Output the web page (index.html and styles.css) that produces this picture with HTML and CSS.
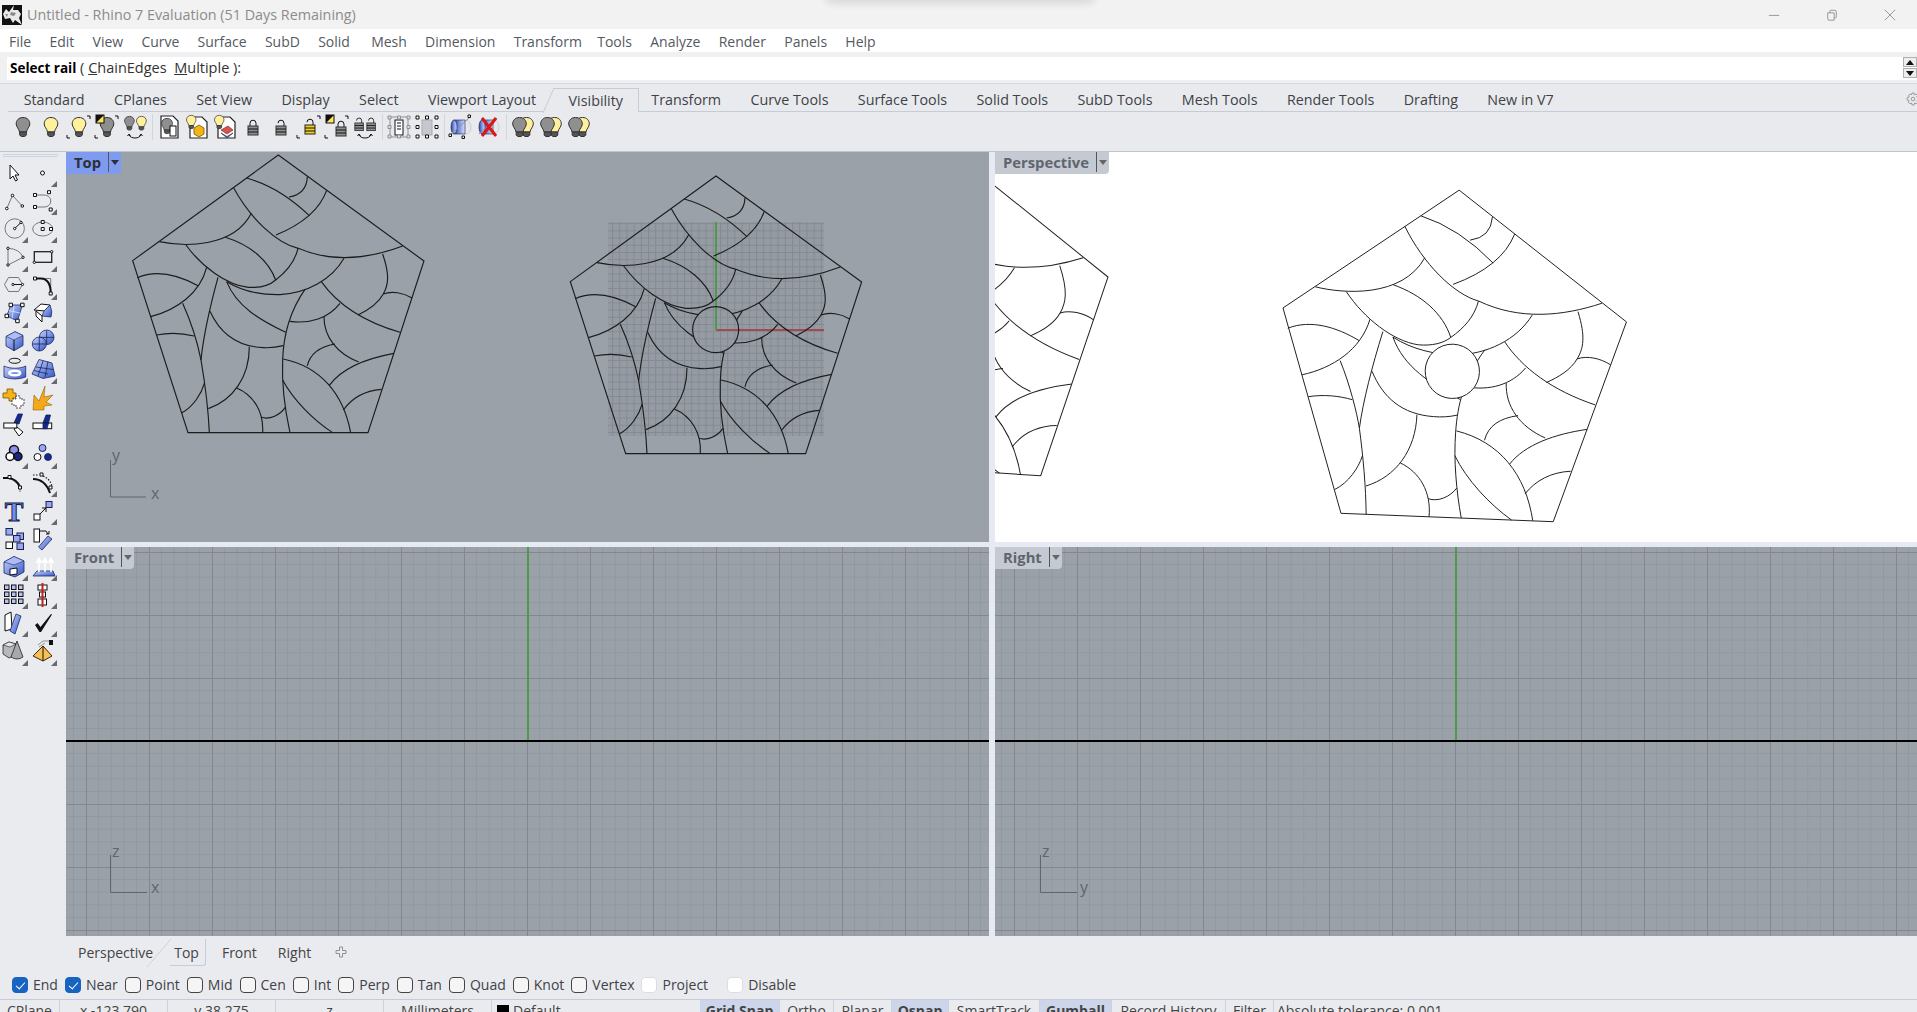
FILE: index.html
```html
<!DOCTYPE html>
<html lang="en">
<head>
<meta charset="utf-8">
<title>Untitled - Rhino 7 Evaluation</title>
<link rel="stylesheet" href="styles.css">
</head>
<body>
<svg class="defs" width="0" height="0" aria-hidden="true">
  <defs>
    <linearGradient id="bl" x1="0" y1="0" x2="1" y2="1"><stop offset="0" stop-color="#c9d4fb"/><stop offset="1" stop-color="#3557c8"/></linearGradient>
    <linearGradient id="cy" x1="0" y1="0" x2="1" y2="0"><stop offset="0" stop-color="#223fa8"/><stop offset=".5" stop-color="#7d97ea"/><stop offset="1" stop-color="#d8dff3"/></linearGradient>
    <g id="pat">
      <path d="M475 15L912 333L744 848L204 848L38 332Z"/>
      <path d="M380 84Q480 112 568 197"/>
      <path d="M562 80Q560 132 507 141"/>
      <path d="M620 121Q590 205 468 255"/>
      <path d="M340 112C390 205 470 280 535 295C640 340 750 325 848 288"/>
      <path d="M118 275C190 290 340 295 394 190"/>
      <path d="M198 285C245 350 320 405 385 412C420 414 450 405 467 390C500 365 525 335 534 295"/>
      <path d="M316 262C390 285 445 330 467 390"/>
      <path d="M320 395C370 425 430 435 480 434C560 430 635 390 672 325"/>
      <path d="M788 312C810 375 805 405 790 432C775 460 745 480 714 495"/>
      <path d="M790 432C815 422 850 428 876 444"/>
      <path d="M604 395C650 460 730 515 840 547"/>
      <path d="M660 460C625 505 570 522 510 514"/>
      <path d="M555 418C505 490 490 560 488 630C485 700 495 780 510 848"/>
      <path d="M320 395C350 470 420 510 497 547"/>
      <path d="M612 500C612 560 650 610 716 636"/>
      <path d="M562 648C570 610 600 590 645 582"/>
      <path d="M822 610C740 625 665 655 628 706"/>
      <path d="M490 627C600 650 670 730 692 848"/>
      <path d="M488 690C520 750 580 810 638 848"/>
      <path d="M784 718C735 722 695 745 670 780"/>
      <path d="M496 772C480 795 450 810 424 802"/>
      <path d="M350 714C400 735 432 785 428 848"/>
      <path d="M388 590C388 680 340 750 265 776"/>
      <path d="M270 484C300 550 350 590 430 593C450 594 470 592 490 587"/>
      <path d="M294 382C270 470 250 560 243 630"/>
      <path d="M188 460C215 520 235 590 243 630C255 700 265 780 268 848"/>
      <path d="M260 352C240 430 170 480 92 500"/>
      <path d="M52 383C110 358 175 375 234 407"/>
      <path d="M110 555C150 547 190 550 222 558"/>
      <path d="M253 700C245 730 220 770 186 788"/>
    </g>
    <mask id="hole" maskUnits="userSpaceOnUse" x="0" y="0" width="960" height="870">
      <rect class="mw" x="0" y="0" width="960" height="870"/>
      <circle class="mk" cx="474" cy="476" r="69"/>
    </mask>
    <g id="patc">
      <g mask="url(#hole)"><use href="#pat"/></g>
      <circle class="pcirc" cx="474" cy="476" r="69"/>
    </g>
    <pattern id="g63" patternUnits="userSpaceOnUse" width="63" height="63">
      <path class="gmin" d="M12.6 0V63M25.2 0V63M37.8 0V63M50.4 0V63M0 12.6H63M0 25.2H63M0 37.8H63M0 50.4H63"/>
      <path class="gmaj" d="M.5 0V63M0 .5H63"/>
    </pattern>
    <pattern id="g7" patternUnits="userSpaceOnUse" width="7.2" height="7.2">
      <rect class="gcell" width="7.2" height="7.2"/>
      <path class="gline" d="M.5 0V7.2M0 .5H7.2"/>
    </pattern>
    <g id="bulb">
      <path d="M7.5 .5C3 .5 .7 3.5 .7 7C.7 10 3.5 11.5 4 15H11C11.5 11.5 14.3 10 14.3 7C14.3 3.5 12 .5 7.5 .5Z"/>
      <path class="base" d="M4.2 15H10.8V18.2L9 19.5H6L4.2 18.2Z"/>
    </g>
    <g id="lock">
      <path class="ln" d="M3 7V4.2a3 3 0 0 1 6 0V7"/>
      <rect x="1" y="7" width="10" height="9"/>
      <path class="ln" d="M1 10H11M1 13H11"/>
    </g>
    <g id="olock">
      <path class="ln" d="M3 4.2a3 3 0 0 1 6 0V7"/>
      <rect x="1" y="7" width="10" height="9"/>
      <path class="ln" d="M1 10H11M1 13H11"/>
    </g>
    <g id="brk"><path class="ln" d="M2 21V24H5M22 2H25V5"/></g>
    <g id="flag"><rect class="fy" x="3" y="1" width="8" height="8"/><path class="fk" d="M3 9V1H11Z"/></g>
    <g id="swap"><path class="ln" d="M8 21C10 25 18 25 20 21M6.5 22L8 20L9.5 22M18.5 22L20 20L21.500 22"/></g>
    <g id="dbl">
      <use href="#bulb" class="yl" transform="translate(10 3)"/>
      <use href="#bulb" class="gy" transform="translate(3 3)"/>
    </g>
    <g id="cyl">
      <ellipse class="ghost" cx="19" cy="13" rx="5" ry="7"/>
      <path class="cyb" d="M7 6H18V20H7Z"/>
      <ellipse class="cyb" cx="7" cy="13" rx="3" ry="7"/>
      <path class="ghostl" d="M4 20L22 4"/>
    </g>
  </defs>
</svg>

<div class="app">
  <header class="titlebar">
    <svg class="logo" viewBox="0 0 20 20" aria-hidden="true"><rect class="lk" width="20" height="20"/><path class="lw" d="M1 9L4 4L7 7L12 0L11 5L16 5L19 9L17 13L20 20L13 15L11 18L8 13L3 14Z"/><path class="lg" d="M9 7L14 8L12 11L8 10ZM3 9L6 9L5 12Z"/></svg>
    <span class="title-text">Untitled - Rhino 7 Evaluation (51 Days Remaining)</span>
    <div class="winbtns">
      <svg class="winbtn" viewBox="0 0 14 14" aria-hidden="true"><path d="M1 7.500H13"/></svg>
      <svg class="winbtn" viewBox="0 0 14 14" aria-hidden="true"><path d="M2 4.500H9.500V13H3.500Q2 13 2 11.500ZM4.500 4.500V2.500Q4.500 1.500 5.500 1.500H10.500Q12 1.500 12 3V9.500Q12 10.500 9.500 10.500"/></svg>
      <svg class="winbtn" viewBox="0 0 14 14" aria-hidden="true"><path d="M1 1L13 13M13 1L1 13"/></svg>
    </div>
    <div class="topglow"></div>
  </header>

  <nav class="menubar">
    <span>File</span><span>Edit</span><span>View</span><span>Curve</span><span>Surface</span><span>SubD</span><span>Solid</span><span class="m-mesh">Mesh</span><span>Dimension</span><span>Transform</span><span class="m-tools">Tools</span><span>Analyze</span><span>Render</span><span>Panels</span><span>Help</span>
  </nav>

  <div class="cmdwrap">
    <div class="cmd">
      <div class="cmd-text"><b>Select rail</b> ( <u>C</u>hainEdges&nbsp; <u>M</u>ultiple ):</div>
      <div class="spin"><span class="spin-up"></span><span class="spin-down"></span></div>
    </div>
  </div>

  <section class="toolarea">
    <div class="tabrow">
      <span class="tab">Standard</span><span class="tab">CPlanes</span><span class="tab">Set View</span><span class="tab">Display</span><span class="tab">Select</span><span class="tab">Viewport Layout</span><span class="tab tab-on"><span class="tab-label">Visibility</span></span><span class="tab">Transform</span><span class="tab">Curve Tools</span><span class="tab">Surface Tools</span><span class="tab">Solid Tools</span><span class="tab">SubD Tools</span><span class="tab">Mesh Tools</span><span class="tab">Render Tools</span><span class="tab">Drafting</span><span class="tab">New in V7</span>
      <svg class="gear" viewBox="0 0 14 14" aria-hidden="true"><path d="M6 1H8L8.400 2.800L10 2L11.500 3.300L10.700 5L12.800 5.500V8L11 8.500L11.700 10.300L10.200 11.700L8.500 11L8 13H6L5.500 11L3.800 11.700L2.300 10.300L3 8.500L1.200 8V5.500L3.200 5L2.500 3.300L4 2L5.600 2.800Z"/><circle cx="7" cy="7" r="1.800"/></svg>
    </div>
    <div class="iconrow">
      <svg class="ti" viewBox="0 0 28 26"><use href="#bulb" class="gy" transform="translate(6.500 3)"/></svg>
      <svg class="ti" viewBox="0 0 28 26"><use href="#bulb" class="yl" transform="translate(6.500 3)"/></svg>
      <svg class="ti" viewBox="0 0 28 26"><use href="#bulb" class="yl" transform="translate(6.500 3)"/><use href="#brk"/></svg>
      <svg class="ti" viewBox="0 0 28 26"><use href="#bulb" class="gy" transform="translate(6.500 3)"/><use href="#flag"/><use href="#brk"/></svg>
      <svg class="ti" viewBox="0 0 28 26"><use href="#bulb" class="gy" transform="translate(3 2) scale(.72)"/><use href="#bulb" class="yl" transform="translate(15 2) scale(.72)"/><use href="#swap"/></svg>
      <span class="tsep"></span>
      <svg class="ti" viewBox="0 0 28 26"><path class="page" d="M6 2H18L23 7V24H6Z"/><use href="#bulb" class="gy" transform="translate(6 4) scale(.8)"/><rect class="wb" x="15" y="12" width="6" height="10"/></svg>
      <svg class="ti" viewBox="0 0 28 26"><path class="page" d="M7 3H19L24 8V24H7Z"/><use href="#bulb" class="yl" transform="translate(3 1) scale(.7)"/><path class="or" d="M11 14L16 11L21 14V20L16 23L11 20Z"/></svg>
      <svg class="ti" viewBox="0 0 28 26"><path class="page" d="M7 3H19L24 8V24H7Z"/><use href="#bulb" class="yl" transform="translate(3 1) scale(.7)"/><path class="rd" d="M10 16L17 12L22 16L16 20Z"/><path class="bs" d="M10 19L16 22.500L22 19L16 24Z"/></svg>
      <svg class="ti" viewBox="0 0 28 26"><use href="#lock" class="gy" transform="translate(8 5)"/></svg>
      <svg class="ti" viewBox="0 0 28 26"><use href="#olock" class="gy" transform="translate(8 5)"/></svg>
      <svg class="ti" viewBox="0 0 28 26"><use href="#olock" class="yb" transform="translate(9 4)"/><use href="#brk"/></svg>
      <svg class="ti" viewBox="0 0 28 26"><use href="#lock" class="gy" transform="translate(12 6)"/><use href="#flag"/><use href="#brk"/></svg>
      <svg class="ti" viewBox="0 0 28 26"><use href="#olock" class="gy" transform="translate(3 3) scale(.85)"/><use href="#olock" class="gy" transform="translate(15 3) scale(.85)"/><use href="#swap"/></svg>
      <span class="tsep"></span>
      <svg class="ti" viewBox="0 0 28 26"><path class="ghostl" d="M5 3H23V23H5Z"/><rect class="wb" x="10" y="6" width="8" height="15"/><path class="gsq" d="M3 2h3v3h-3zM12.500 2h3v3h-3zM22 2h3v3h-3zM3 11.500h3v3h-3zM22 11.500h3v3h-3zM3 21h3v3h-3zM12.500 21h3v3h-3zM22 21h3v3h-3z"/><path class="ln" d="M12 9h4M12 12h4M12 15h4"/></svg>
      <svg class="ti" viewBox="0 0 28 26"><rect class="ghostf" x="9" y="6" width="10" height="15"/><path class="wsq" d="M3 2h3v3h-3zM12.500 2h3v3h-3zM22 2h3v3h-3zM3 11.500h3v3h-3zM22 11.500h3v3h-3zM3 21h3v3h-3zM12.500 21h3v3h-3zM22 21h3v3h-3z"/></svg>
      <span class="tsep"></span>
      <svg class="ti" viewBox="0 0 28 26"><use href="#cyl"/><path class="wsq" d="M21 1h2.500v2.500h-2.500zM2 20h2.500v2.500h-2.500zM15 22h2.500v2.500h-2.500z"/></svg>
      <svg class="ti" viewBox="0 0 28 26"><use href="#cyl"/><path class="xr" d="M7 4L21 22M21 4L7 22"/></svg>
      <span class="tsep"></span>
      <svg class="ti" viewBox="0 0 28 26"><use href="#dbl"/></svg>
      <svg class="ti" viewBox="0 0 28 26"><use href="#dbl"/></svg>
      <svg class="ti" viewBox="0 0 28 26"><use href="#dbl"/></svg>
    </div>
  </section>

  <main class="main">
    <aside class="sidebar">
      <div class="grip"></div>
      <div class="sidegrid">
        <div class="si"><svg viewBox="0 0 24 24"><path class="wb" d="M8 4V18L11 15L13.500 20L15.500 19L13 14H17Z"/></svg></div>
        <div class="si fly"><svg viewBox="0 0 24 24"><circle class="wb" cx="11.500" cy="12" r="2"/></svg></div>
        <div class="si"><svg viewBox="0 0 24 24"><path class="gl" d="M4.800 19.500L10.500 6.500L20.300 17"/><g class="wb"><circle cx="4.800" cy="19.500" r="1.300"/><circle cx="10.500" cy="6.500" r="1.300"/><circle cx="20.300" cy="17" r="1.300"/></g></svg></div>
        <div class="si fly"><svg viewBox="0 0 24 24"><path class="gl" d="M4 6H13C22 6 22 18 13 18H4"/><path class="wsq" d="M2.500 4.500h3v3h-3zM16.500 1.700h3v3h-3zM2.500 16.500h3v3h-3zM18.200 19h3v3h-3z"/></svg></div>
        <div class="si fly"><svg viewBox="0 0 24 24"><circle class="gl" cx="12.700" cy="11.500" r="9.700"/><path class="ln" d="M12.700 11.500L19 5.500"/><g class="wb"><circle cx="12.700" cy="11.500" r="1.200"/><circle cx="19" cy="5.500" r="1.200"/></g></svg></div>
        <div class="si fly"><svg viewBox="0 0 24 24"><ellipse class="gl" cx="11.700" cy="12" rx="10" ry="7"/><path class="wsq" d="M10.200 3.500h3v3h-3zM10.200 10.500h3v3h-3zM18.500 10.500h3v3h-3z"/></svg></div>
        <div class="si fly"><svg viewBox="0 0 24 24"><path class="gl" d="M6 3.300Q18 4 21 12.300L6 20Z"/><g class="wb"><circle cx="6" cy="3.300" r="1.200"/><circle cx="21" cy="12.300" r="1.200"/><circle cx="6" cy="20" r="1.200"/></g></svg></div>
        <div class="si fly"><svg viewBox="0 0 24 24"><rect class="ln15" x="3.300" y="6.700" width="17.400" height="10.600"/><g class="wb"><circle cx="20.700" cy="6.700" r="1.200"/><circle cx="3.300" cy="17.300" r="1.200"/></g></svg></div>
        <div class="si fly"><svg viewBox="0 0 24 24"><path class="gl" d="M6.500 3.500H16.500L20.500 10.500L16.500 17.500H6.500L2.500 10.500Z"/><path class="ln" d="M11 10.500H20.500"/><g class="wb"><circle cx="11" cy="10.500" r="1.100"/><circle cx="20.500" cy="10.500" r="1.100"/></g></svg></div>
        <div class="si fly"><svg viewBox="0 0 24 24"><path class="gl" d="M10 4.500H19.700V19.500"/><path class="ln2" d="M4 4.500H10Q19.700 5 19.700 19.500"/><path class="wsq" d="M2.500 3h3v3h-3zM18.200 18h3v3h-3z"/></svg></div>
        <div class="si fly"><svg viewBox="0 0 24 24"><path class="bu" d="M8.800 3H20.400L15.400 19L4.800 14Z"/><path class="wl" d="M6.800 8.500L18 11M12 4L10 16.500"/><path class="wsq" d="M7 1.200h3.500v3.500h-3.500zM18.600 1.200h3.500v3.500h-3.500zM3 12.200h3.500v3.500h-3.500zM13.700 17.200h3.500v3.500h-3.500z"/></svg></div>
        <div class="si fly"><svg viewBox="0 0 24 24"><path class="wb" d="M3 8L10 2L19 3L14 9Z"/><path class="bu" d="M13 9L19 3Q22 10 20 15L11 14Z"/><path class="wb" d="M5 9L11 14V20L5 14Z"/></svg></div>
        <div class="si fly"><svg viewBox="0 0 24 24"><path class="bu" d="M4 6.500L13 1.700L21 5.500V15.500L12 20.700L4 16Z"/><path class="tp" d="M4 6.500L13 1.700L21 5.500L12 10Z"/><path class="ln" d="M12 10V20.700"/></svg></div>
        <div class="si fly"><svg viewBox="0 0 24 24"><circle class="bu" cx="15.700" cy="7.300" r="7.300"/><circle class="bu" cx="8.300" cy="14" r="7"/><path class="wk" d="M8.400 7.400H23M15.700 .5V14.200M1.400 14H15M8.300 7.200V21"/></svg></div>
        <div class="si fly"><svg viewBox="0 0 24 24"><ellipse class="ln" cx="12.700" cy="2.800" rx="5.700" ry="2.500"/><path class="bu" d="M2 8C8 11 18 11 23.700 8V19Q13 23 2 19Z"/><ellipse class="rg" cx="12.700" cy="15" rx="5.500" ry="2.300"/></svg></div>
        <div class="si fly"><svg viewBox="0 0 24 24"><path class="bu" d="M8 1.500L21 5L24 18L12 20.500L1 16Z"/><path class="wk" d="M5 9L22 11.500M3 12.500L17 16M12 3L7 18M17 3.500L14 19"/></svg></div>
        <div class="si"><svg viewBox="0 0 24 24"><path class="or" d="M1 7h4V3h6v4h3v5h-3v3h-4v-3h-6z"/><path class="wp" d="M10 13h4v-3h4v3h4v6h-3v3h-5v-3h-4z"/></svg></div>
        <div class="si"><svg viewBox="0 0 24 24"><path class="og" d="M2 24L3 9L8 15L14 0L13 11L22 9L15 16L21 19L13 20L13 24Z"/></svg></div>
        <div class="si"><svg viewBox="0 0 24 24"><path class="nv" d="M12 9L16 0H20.500L17 10Z"/><path class="wb" d="M15 13L21 18L17 22L12 15Z"/><rect class="wb" x="1.800" y="9" width="13" height="5"/></svg></div>
        <div class="si"><svg viewBox="0 0 24 24"><path class="nv" d="M12 9L15 1H19.500L17.500 9Z"/><rect class="wb" x="2" y="9" width="18.700" height="5.700"/><path class="nv" d="M12 9H17.500L16 14.700H12Z"/></svg></div>
        <div class="si fly"><svg viewBox="0 0 24 24"><circle class="lav" cx="12" cy="8" r="4.500"/><circle class="wb2" cx="8" cy="14.500" r="4"/><circle class="nv2" cx="16" cy="14.500" r="4"/></svg></div>
        <div class="si fly"><svg viewBox="0 0 24 24"><circle class="lav1" cx="11.500" cy="6" r="3.500"/><circle class="wb" cx="6.500" cy="15" r="3.500"/><circle class="nv" cx="17" cy="15" r="3.500"/></svg></div>
        <div class="si"><svg viewBox="0 0 24 24"><path class="gl" d="M1 7Q12 6 18 17L18 21"/><path class="ln2" d="M1 7H6Q15 8 18 16"/><path class="wsq" d="M6 4.500h3v3h-3zM16.500 15h3v3h-3z"/></svg></div>
        <div class="si fly"><svg viewBox="0 0 24 24"><path class="ln2" d="M2 8Q14 8 19 22"/><path class="dot" d="M2 4H8M12 5Q19 8 21 15"/><path class="wsq" d="M9 2h3v3h-3zM18 15h3v3h-3z"/></svg></div>
        <div class="si"><svg viewBox="0 0 24 24"><text class="tee" x="12" y="22">T</text></svg></div>
        <div class="si fly"><svg viewBox="0 0 24 24"><rect class="lav1" x="15" y="2.500" width="6" height="6"/><rect class="wb" x="3" y="15" width="6" height="6"/><path class="ln" d="M9 15L15 9M11 9H15V13"/></svg></div>
        <div class="si"><svg viewBox="0 0 24 24"><rect class="lav1" x="4" y="1.500" width="6.500" height="6.500"/><rect class="lav1" x="15" y="6" width="6.500" height="6.500"/><rect class="lav1" x="11.500" y="8.500" width="6.500" height="6.500"/><rect class="wb" x="4" y="15" width="6.500" height="6.500"/><rect class="lav1" x="15" y="16" width="6.500" height="6.500"/></svg></div>
        <div class="si"><svg viewBox="0 0 24 24"><rect class="wb" x="3" y="2" width="5.500" height="13"/><path class="bu" d="M7.500 20L17 9L21 12L11 23Z"/><path class="ln" d="M8.500 4H15L17 7M15 7H18V4"/></svg></div>
        <div class="si fly"><svg viewBox="0 0 24 24"><path class="bu" d="M2 7L12 1.500L22 6V17L13 22L2 18Z"/><path class="wb" d="M8 14L15 13V19L8 20Z"/><path class="tp" d="M2 7L12 1.500L22 6L12 10Z"/></svg></div>
        <div class="si fly"><svg viewBox="0 0 24 24"><path class="bu" d="M2 21L6 16H22L24 21Z"/><path class="wa" d="M8 17V5M5.500 8L8 3.500L10.500 8M14 17V5M11.500 8L14 3.500L16.500 8M20 17V5M17.500 8L20 3.500L22.500 8"/></svg></div>
        <div class="si fly"><svg viewBox="0 0 24 24"><g class="sqb"><rect x="2.500" y="2" width="4.500" height="4.500"/><rect x="9.500" y="2" width="4.500" height="4.500"/><rect x="16.500" y="2" width="4.500" height="4.500"/><rect x="2.500" y="9" width="4.500" height="4.500"/><rect x="9.500" y="9" width="4.500" height="4.500"/><rect x="16.500" y="9" width="4.500" height="4.500"/><rect x="2.500" y="16" width="4.500" height="4.500"/><rect x="9.500" y="16" width="4.500" height="4.500"/><rect x="16.500" y="16" width="4.500" height="4.500"/></g></svg></div>
        <div class="si fly"><svg viewBox="0 0 24 24"><rect class="wb" x="7" y="2" width="9" height="5"/><rect class="wb" x="8.500" y="9" width="6" height="5"/><rect class="wb" x="7" y="16" width="8.500" height="6"/><path class="rl" d="M11.500 0V24"/></svg></div>
        <div class="si fly"><svg viewBox="0 0 24 24"><path class="wb" d="M3 4L9 1L10 18L3 20Z"/><path class="bu" d="M8 20L14 3L19 5L13 23Z"/></svg></div>
        <div class="si fly"><svg viewBox="0 0 24 24"><path class="ck" d="M4 14L6.500 12L9.500 16L20 3L21 3.500L10 21H8.500Z"/></svg></div>
        <div class="si fly"><svg viewBox="0 0 24 24"><path class="gb" d="M1 6L7 3L14 5V16L7 19L1 15Z"/><path class="gbt" d="M1 6L7 3L14 5L8 8Z"/><path class="gb2" d="M15 2L9 18Q15 22 21 18Z"/></svg></div>
        <div class="si fly"><svg viewBox="0 0 24 24"><path class="ol" d="M2 17L12 7L21 17L12 22Z"/><path class="ln" d="M12 7L12 22"/><path class="ghostl" d="M7 6L12 2H18M8 8L14 4"/><rect class="blk" x="18" y="1" width="4" height="5"/></svg></div>
      </div>
    </aside>

    <div class="viewports">
      <section class="vp">
        <svg class="art" viewBox="66 152 923 390">
          <rect class="bgv" x="66" y="152" width="923" height="390"/>
          <rect class="patch" x="608" y="222" width="216" height="214"/>
          <path class="ax-r" d="M716 330H824"/>
          <path class="ax-g" d="M716 222V330"/>
          <use class="pc" href="#pat" transform="matrix(.3333 0 0 .3333 120 150)"/>
          <use class="pc" href="#patc" transform="matrix(.3333 0 0 .3333 557.670 171)"/>
          <path class="axw" d="M110.500 460V497H146"/>
          <text class="axl" x="112" y="461">y</text>
          <text class="axl" x="151" y="499">x</text>
        </svg>
        <div class="vtag vtag-on"><span>Top</span><i></i></div>
      </section>
      <section class="vp">
        <svg class="art" viewBox="995 152 922 390">
          <rect class="bgw" x="995" y="152" width="922" height="390"/>
          <use class="pp" href="#patc" transform="matrix(.39 .025 -.0035 .394 753.500 123)"/>
          <use class="pp" href="#patc" transform="matrix(.393 .0155 -.014 .393 1272.700 176.900)"/>
        </svg>
        <div class="vtag"><span>Perspective</span><i></i></div>
      </section>
      <section class="vp">
        <svg class="art" viewBox="66 547 923 389">
          <rect class="bgv" x="66" y="547" width="923" height="389"/>
          <rect class="gridr" x="-630" y="-63" width="1100" height="500" transform="translate(527 552)"/>
          <path class="ax-g" d="M528 547V741"/>
          <path class="ax-k" d="M66 741H989"/>
          <path class="axw" d="M110.500 855V892.500H147"/>
          <text class="axl" x="112" y="857">z</text>
          <text class="axl" x="151" y="893">x</text>
        </svg>
        <div class="vtag"><span>Front</span><i></i></div>
      </section>
      <section class="vp">
        <svg class="art" viewBox="995 547 922 389">
          <rect class="bgv" x="995" y="547" width="922" height="389"/>
          <rect class="gridr" x="-630" y="-63" width="1100" height="500" transform="translate(1455 552)"/>
          <path class="ax-g" d="M1456 547V741"/>
          <path class="ax-k" d="M995 741H1917"/>
          <path class="axw" d="M1040.500 855V892.500H1077"/>
          <text class="axl" x="1042" y="857">z</text>
          <text class="axl" x="1080" y="893">y</text>
        </svg>
        <div class="vtag"><span>Right</span><i></i></div>
      </section>
    </div>
  </main>

  <div class="vtabs">
    <span class="vt">Perspective</span><span class="vt vt-on">Top</span><span class="vt">Front</span><span class="vt">Right</span>
    <svg class="plus" viewBox="0 0 12 12" aria-hidden="true"><path d="M4.500 1H7.500V4.500H11V7.500H7.500V11H4.500V7.500H1V4.500H4.500Z"/></svg>
  </div>

  <div class="snaps">
    <label class="snap"><i class="cb on"></i>End</label>
    <label class="snap"><i class="cb on"></i>Near</label>
    <label class="snap"><i class="cb"></i>Point</label>
    <label class="snap"><i class="cb"></i>Mid</label>
    <label class="snap"><i class="cb"></i>Cen</label>
    <label class="snap"><i class="cb"></i>Int</label>
    <label class="snap"><i class="cb"></i>Perp</label>
    <label class="snap"><i class="cb"></i>Tan</label>
    <label class="snap"><i class="cb"></i>Quad</label>
    <label class="snap"><i class="cb"></i>Knot</label>
    <label class="snap"><i class="cb"></i>Vertex</label>
    <label class="snap"><i class="cb off"></i>Project</label>
    <label class="snap snap-dis"><i class="cb off"></i>Disable</label>
  </div>

  <footer class="status">
    <span class="c c-plane">CPlane</span>
    <span class="c c-coord">x -123.790</span>
    <span class="c c-coord">y 38.275</span>
    <span class="c c-coord">z</span>
    <span class="c c-coord">Millimeters</span>
    <span class="c c-layer"><i class="swatch"></i>Default</span>
    <span class="c c-grid on">Grid Snap</span>
    <span class="c c-ortho">Ortho</span>
    <span class="c c-planar">Planar</span>
    <span class="c c-osnap on">Osnap</span>
    <span class="c c-smart">SmartTrack</span>
    <span class="c c-gum on">Gumball</span>
    <span class="c c-rec">Record History</span>
    <span class="c c-filter">Filter</span>
    <span class="c c-tol">Absolute tolerance: 0.001</span>
  </footer>
</div>
</body>
</html>
```
FILE: styles.css
```css
* { box-sizing: border-box; }
html, body { margin: 0; height: 1012px; overflow: hidden; }
body { font-family: "Open Sans", "Noto Sans", sans-serif; font-size: 14px; color: #444; background: #eaebef; }
.defs { position: absolute; }
.app { display: flex; flex-direction: column; height: 1012px; overflow: hidden; }

/* title */
.titlebar { position: relative; flex: 0 0 29px; display: flex; align-items: center; background: #f2f2f2; padding-left: 2px; }
.logo { width: 20px; height: 20px; margin-right: 5px; }
.lk { fill: #111; }
.lw { fill: #e8e8e8; }
.lg { fill: #8a8a8a; }
.title-text { color: #8c8c8c; font-size: 14.350px; }
.winbtns { margin-left: auto; display: flex; gap: 46px; padding-right: 21px; }
.winbtn { width: 12px; height: 12px; overflow: visible; }
.winbtn path { fill: none; stroke: #8b8b8b; stroke-width: 1; }
.topglow { position: absolute; left: 830px; top: -8px; width: 260px; height: 8px; box-shadow: 0 0 8px 3px rgba(0,0,0,.12); }

/* menu */
.menubar { flex: 0 0 23px; display: flex; align-items: center; gap: 18.250px; background: #fff; padding-left: 9px; color: #55595f; padding-top: 1px; }
.m-mesh { margin-left: 3px; }
.m-tools { margin-left: -3px; }

/* command */
.cmdwrap { flex: 0 0 31px; background: #eef0f2; padding: 5px 0 3px 7px; }
.cmd { height: 23px; background: #fff; display: flex; align-items: center; padding-left: 3px; color: #333; font-size: 14.500px; padding-bottom: 2px; }
.cmd-text { flex: 1; }
.cmd-text b { color: #000; font-weight: 700; font-size: 13.500px; }
.spin { width: 14px; height: 23px; display: flex; flex-direction: column; justify-content: space-between; padding: 1px 0; }
.spin span { display: flex; justify-content: center; align-items: center; height: 10px; border: 1px solid #b0b0b0; background: #eee; }
.spin-up::before { content: ""; border: 4px solid transparent; border-top: 0; border-bottom: 5px solid #111; }
.spin-down::before { content: ""; border: 4px solid transparent; border-bottom: 0; border-top: 5px solid #111; }

/* ribbon */
.toolarea { flex: 0 0 68px; border-top: 1px solid #d4d7df; background: #e9eaee; padding-left: 8px; }
.tabrow { position: relative; height: 28px; display: flex; align-items: flex-end; padding-left: 1px; border-bottom: 1px solid #c5cbd9; }
.tab { padding: 0 14.7px; height: 23px; line-height: 23px; font-size: 14.300px; color: #3e4248; white-space: nowrap; }
.tab-on { position: relative; background: #e9eaee; height: 24px; margin: 0 -2px -1px 3px; border-right: 1px solid #c5cbd9; border-top: 1px solid #c5cbd9; color: #3e4248; }
.tab-on::before { content: ""; position: absolute; left: -6px; top: -1px; width: 14px; height: 24px; background: #e9eaee; border-left: 1px solid #c5cbd9; border-top: 1px solid #c5cbd9; transform: skewX(-24deg); }
.tab-label { position: relative; }
.gear { position: absolute; right: -3px; top: 8px; width: 14px; height: 14px; }
.gear path, .gear circle { fill: none; stroke: #9a9a9a; }
.iconrow { display: flex; align-items: center; height: 29px; padding-left: 1px; }
.ti { flex: 0 0 28px; width: 28px; height: 26px; overflow: visible; }
.tsep { flex: 0 0 1px; height: 26px; margin: 0 2.500px; background: #d2d5dc; }

/* svg paint */
.gy { fill: #8f8f8f; stroke: #333; stroke-width: 1; }
.yl { fill: #fff09c; stroke: #333; stroke-width: 1; }
.yb { fill: #f5d020; stroke: #222; stroke-width: 1; }
.base { fill: #555; stroke: #333; }
.ln { fill: none; stroke: #111; stroke-width: 1; }
.ln15 { fill: none; stroke: #222; stroke-width: 1.300; }
.ln2 { fill: none; stroke: #111; stroke-width: 2; }
.gl { fill: none; stroke: #777; stroke-width: 1; }
.fy { fill: #ffe84f; stroke: #111; }
.fk { fill: #111; }
.page { fill: #fff; stroke: #222; stroke-width: 1.200; }
.wb { fill: #fff; stroke: #111; stroke-width: 1; }
.wb2 { fill: #fff; stroke: #111; stroke-width: 1.500; }
.or { fill: #f4b415; stroke: #7a5200; stroke-width: .8; }
.rd { fill: #d8554a; stroke: #622; stroke-width: .6; }
.bs { fill: #5a6fc9; stroke: #223; stroke-width: .6; }
.ghost { fill: #e5e7ee; stroke: #c9ccd4; }
.ghostl { fill: none; stroke: #8e9097; stroke-width: 1; }
.ghostf { fill: #c5c8cf; stroke: #a8abb2; }
.cyb { fill: url(#cy); stroke: #223; stroke-width: .6; }
.gsq { fill: #dedfe4; stroke: #8e9097; stroke-width: 1; }
.wsq { fill: #fff; stroke: #111; stroke-width: 1; }
.xr { fill: none; stroke: #d81818; stroke-width: 3; }
.bu { fill: url(#bl); stroke: #1b2a66; stroke-width: .8; }
.tp { fill: #aebcf5; stroke: #1b2a66; stroke-width: .6; }
.wl { fill: none; stroke: #dfe6ff; stroke-width: .8; }
.wk { fill: none; stroke: #18245c; stroke-width: .8; }
.rg { fill: none; stroke: #fff; stroke-width: 2.400; }
.wp { fill: #fff; stroke: #222; stroke-width: .8; stroke-dasharray: 2 1; }
.og { fill: #f5a81c; stroke: #7a5200; stroke-width: .5; }
.nv { fill: #152a8c; stroke: #10205f; stroke-width: .8; }
.nv2 { fill: #1a2685; stroke: #111; stroke-width: 1.500; }
.lav { fill: #8f90ee; stroke: #111; stroke-width: 1.500; }
.lav1 { fill: #99a6f4; stroke: #1c2347; stroke-width: 1; }
.dot { fill: none; stroke: #111; stroke-width: 1.200; stroke-dasharray: 1.500 1.500; }
.tee { font-family: "Liberation Serif", serif; font-weight: 700; font-size: 28px; text-anchor: middle; fill: #6f8fef; stroke: #0c1540; stroke-width: .9; }
.wa { fill: none; stroke: #fff; stroke-width: 1.600; }
.sqb rect { fill: #b7c3f6; stroke: #111; stroke-width: 1; }
.rl { fill: none; stroke: #c61e1e; stroke-width: 2; }
.ck { fill: #111; }
.gb { fill: #b6b8bd; stroke: #222; stroke-width: .8; }
.gbt { fill: #e4e5e8; stroke: #222; stroke-width: .6; }
.gb2 { fill: #a6a8ae; stroke: #222; stroke-width: .8; }
.ol { fill: #f7bf55; stroke: #3f2b00; stroke-width: 1; }
.blk { fill: #111; }
.mw { fill: #fff; }
.mk { fill: #000; }

/* main area */
.main { flex: 0 0 785px; display: flex; border-top: 1px solid #bfc5d3; }
.sidebar { flex: 0 0 66px; background: #eaebef; padding-top: 2px; }
.grip { margin: 0 8px 0 3px; height: 3px; border-top: 1px solid #ccd3e1; border-bottom: 1px solid #ccd3e1; }
.sidegrid { display: grid; grid-template-columns: 28.500px 29px; grid-auto-rows: 28.150px; margin-top: 2px; }
.si { position: relative; display: flex; align-items: center; justify-content: center; }
.si svg { width: 24px; height: 24px; overflow: visible; }
.fly::after { content: ""; position: absolute; right: 1px; bottom: 0; border-style: solid; border-width: 0 0 6px 6px; border-color: transparent transparent #68696d transparent; }

.viewports { flex: 1; display: grid; grid-template-columns: 923px 922px; grid-template-rows: 390px 389px; gap: 5px 6px; background: #e7eaf2; }
.vp { position: relative; overflow: hidden; }
.art { display: block; width: 100%; height: 100%; }
.bgv { fill: #9aa1a9; }
.bgw { fill: #fff; }
.gridr { fill: url(#g63); }
.gmin { fill: none; stroke: #92989f; stroke-width: 1; }
.gmaj { fill: none; stroke: #84878f; stroke-width: 1; }
.patch { fill: url(#g7); }
.gcell { fill: #959ba3; }
.gline { fill: none; stroke: #858a92; stroke-width: 1; }
.ax-g { fill: none; stroke: #4d9a4c; stroke-width: 2; }
.ax-r { fill: none; stroke: #a24b4e; stroke-width: 2; }
.ax-k { fill: none; stroke: #000; stroke-width: 2; }
.axw { fill: none; stroke: #62666c; stroke-width: 1; }
.axl { font-family: "Open Sans", sans-serif; font-size: 16px; fill: #62666c; }
#pat path, .pcirc { fill: none; vector-effect: non-scaling-stroke; }
.pc { stroke: #1c1c1c; stroke-width: 1.150; }
.pp { stroke: #222; stroke-width: 1; }
.vtag { position: absolute; left: 0; top: 0; height: 22px; display: flex; align-items: center; background: #c5cad2; border-bottom-right-radius: 4px; padding-left: 8px; padding-bottom: 2px; color: #5f656e; font-weight: 700; font-size: 14.800px; }
.vtag i { position: relative; width: 13px; height: 20px; margin-left: 7px; border-left: 1px solid #555; }
.vtag i::after { content: ""; position: absolute; left: 2px; top: 8px; border: 4.500px solid transparent; border-bottom: 0; border-top: 5px solid #666; }
.vtag-on { background: #7f9bf0; color: #2c2f38; }
.vtag-on i::after { border-top-color: #2c2f38; }

/* view tabs */
.vtabs { flex: 0 0 32px; display: flex; align-items: center; padding-left: 78px; color: #444; }
.vt { white-space: nowrap; margin-right: 21px; }
.vt-on { position: relative; margin-right: 23px; }
.vt-on::after { content: ""; position: absolute; left: -4px; right: -7px; top: -4px; bottom: -4px; border-right: 1px solid #c5cbd9; border-bottom: 1px solid #c5cbd9; border-bottom-right-radius: 3px; }
.vt-on::before { content: ""; position: absolute; left: -27px; top: -4px; width: 24px; height: 28px; background: linear-gradient(to top right, transparent calc(50% - .6px), #c5cbd9 50%, transparent calc(50% + .6px)); transform: scaleX(-1); }
.plus { width: 12px; height: 12px; margin-left: 3px; }
.plus path { fill: none; stroke: #8e9097; }

/* osnap */
.snaps { flex: 0 0 31px; display: flex; align-items: center; gap: 7px; padding: 2px 0 0 12px; color: #3f4246; }
.snap { display: flex; align-items: center; gap: 5px; white-space: nowrap; }
.snap-dis { margin-left: 12px; }
.cb { position: relative; width: 16px; height: 16px; border: 1px solid #444; border-radius: 4px; background: #f5f5f5; }
.cb.on { background: #1763c2; border-color: #1763c2; }
.cb.on::after { content: ""; position: absolute; left: 5px; top: 2px; width: 4px; height: 8px; border: solid #fff; border-width: 0 1.300px 1.300px 0; transform: rotate(42deg); }
.cb.off { background: #fff; border-color: #dcdde2; }

/* status */
.status { flex: 0 0 26px; display: flex; border-top: 1px solid #c5cbd9; color: #444; }
.c { border-right: 1px solid #ccd1dc; line-height: 21px; height: 26px; text-align: center; white-space: nowrap; }
.c-plane { flex: 0 0 60px; }
.c-coord { flex: 0 0 108px; }
.c-layer { flex: 0 0 208px; text-align: left; padding-left: 5px; display: flex; align-items: flex-start; gap: 4px; border-right: 0; }
.swatch { width: 12px; height: 12px; background: #000; margin-top: 5px; }
.c.on { background: #ccd5ea; font-weight: 700; }
.c-grid { flex: 0 0 80px; }
.c-ortho { flex: 0 0 54px; }
.c-planar { flex: 0 0 58px; }
.c-osnap { flex: 0 0 57px; }
.c-smart { flex: 0 0 91px; }
.c-gum { flex: 0 0 72px; }
.c-rec { flex: 0 0 114px; }
.c-filter { flex: 0 0 48px; }
.c-tol { flex: 1; text-align: left; padding-left: 3px; border-right: 0; }
```
